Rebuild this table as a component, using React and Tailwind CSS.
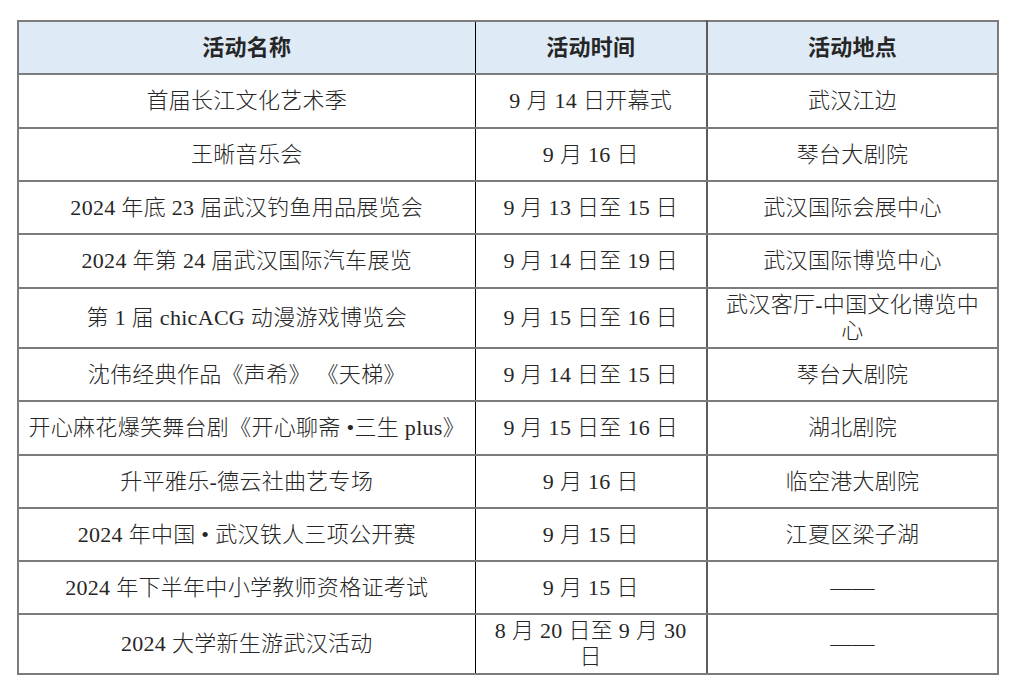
import React from "react";

const rows = [
  { name: "首届长江文化艺术季", time: "9 月 14 日开幕式", place: "武汉江边", h: "h-[54px]" },
  { name: "王晰音乐会", time: "9 月 16 日", place: "琴台大剧院", h: "h-[53px]" },
  { name: "2024 年底 23 届武汉钓鱼用品展览会", time: "9 月 13 日至 15 日", place: "武汉国际会展中心", h: "h-[53px]" },
  { name: "2024 年第 24 届武汉国际汽车展览", time: "9 月 14 日至 19 日", place: "武汉国际博览中心", h: "h-[54px]" },
  { name: "第 1 届 chicACG 动漫游戏博览会", time: "9 月 15 日至 16 日", place: ["武汉客厅-中国文化博览中", "心"], h: "h-[60px]" },
  { name: "沈伟经典作品《声希》 《天梯》", time: "9 月 14 日至 15 日", place: "琴台大剧院", h: "h-[53px]" },
  { name: "开心麻花爆笑舞台剧《开心聊斋 •三生 plus》", time: "9 月 15 日至 16 日", place: "湖北剧院", h: "h-[54px]" },
  { name: "升平雅乐-德云社曲艺专场", time: "9 月 16 日", place: "临空港大剧院", h: "h-[53px]" },
  { name: "2024 年中国 • 武汉铁人三项公开赛", time: "9 月 15 日", place: "江夏区梁子湖", h: "h-[53px]" },
  { name: "2024 年下半年中小学教师资格证考试", time: "9 月 15 日", place: "——", h: "h-[53px]" },
  { name: "2024 大学新生游武汉活动", time: ["8 月 20 日至 9 月 30", "日"], place: "——", h: "h-[60px]" },
];

const Lines = ({ value }) =>
  Array.isArray(value) ? (
    <>
      {value[0]}
      <br />
      {value[1]}
    </>
  ) : (
    value
  );

export default function App() {
  return (
    <div className="min-h-screen bg-white pt-[20px] pl-[17px] font-['Liberation_Serif','Noto_Sans_CJK_SC',serif] text-[#262626]">
      <table className="w-[980px] table-fixed border-collapse text-[22px] leading-[26px] tracking-[0.3px]">
        <colgroup>
          <col className="w-[457px]" />
          <col className="w-[232px]" />
          <col className="w-[291px]" />
        </colgroup>
        <thead>
          <tr className="h-[53px] bg-[#deeaf6]">
            <th className="border-2 border-r border-[#7c7c7c] border-r-black text-center font-bold">活动名称</th>
            <th className="border-y-2 border-[#7c7c7c] border-r-2 border-r-[#5c5c5c] text-center font-bold">活动时间</th>
            <th className="border-2 border-[#7c7c7c] border-l-[#5c5c5c] text-center font-bold">活动地点</th>
          </tr>
        </thead>
        <tbody>
          {rows.map((r) => (
            <tr key={r.name} className={r.h}>
              <td className="whitespace-nowrap border-2 border-r border-[#7c7c7c] border-r-black px-1 text-center align-middle font-light">
                {r.name}
              </td>
              <td className="border-y-2 border-[#7c7c7c] border-r-2 border-r-[#5c5c5c] px-1 text-center align-middle font-light">
                <Lines value={r.time} />
              </td>
              <td className="border-2 border-[#7c7c7c] border-l-[#5c5c5c] px-1 text-center align-middle font-light">
                <Lines value={r.place} />
              </td>
            </tr>
          ))}
        </tbody>
      </table>
    </div>
  );
}
